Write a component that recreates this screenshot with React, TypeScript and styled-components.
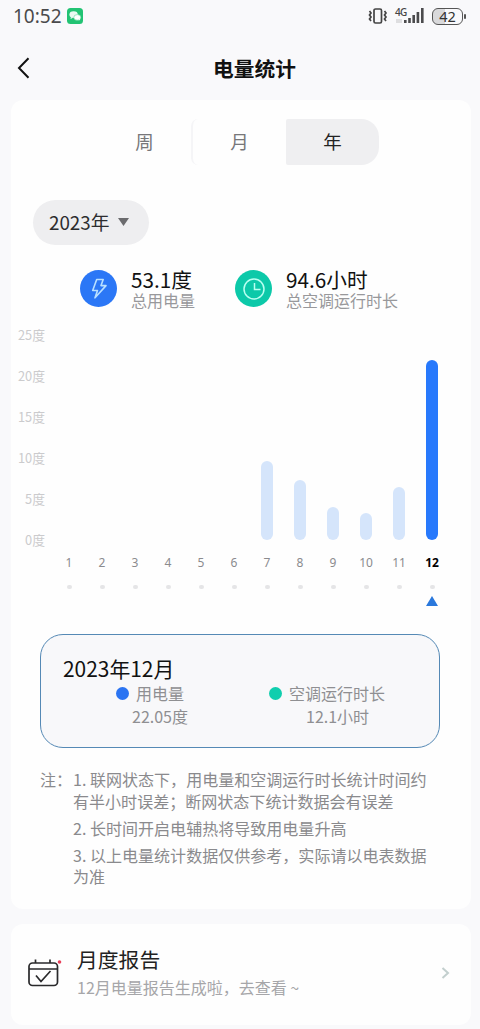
import React from 'react';
import styled, { createGlobalStyle } from 'styled-components';

const GlobalStyle = createGlobalStyle`
  *, *::before, *::after { box-sizing: border-box; }
  body {
    margin: 0;
    background: #f9f9fb;
    font-family: "Noto Sans CJK SC", sans-serif;
    color: #111;
  }
  svg { display: block; flex: none; }
`;

const Screen = styled.div`
  width: 480px;
  height: 1029px;
  overflow: hidden;
  display: flex;
  flex-direction: column;
`;

const StatusBar = styled.div`
  height: 34px;
  padding: 0 14px 2px 13px;
  display: flex;
  align-items: center;
`;

const Clock = styled.span`
  font: 400 19px/30px "Noto Sans", "Noto Sans CJK SC", sans-serif;
  color: #4a4a4c;
  width: 54px;
`;

const StatusIcons = styled.div`
  margin-left: auto;
  display: flex;
  align-items: center;
`;

const Signal = styled.div`
  position: relative;
  margin: 0 7px 0 7px;
`;

const NetworkType = styled.span`
  position: absolute;
  left: 0;
  top: -1px;
  font: 500 10px/12px "Noto Sans", sans-serif;
  letter-spacing: -0.6px;
  color: #444;
`;

const Battery = styled.div`
  width: 31px;
  height: 17px;
  border: 1.5px solid #555;
  border-radius: 6px;
  background: linear-gradient(90deg, #d9d9db 42%, #f9f9fb 42%);
  font: 400 14.5px/15px "Noto Sans", sans-serif;
  color: #333;
  text-align: center;
`;

const BatteryTip = styled.i`
  width: 2px;
  height: 5px;
  margin-left: 1px;
  background: #555;
  border-radius: 1px;
`;

const NavBar = styled.header`
  height: 66px;
  display: grid;
  grid-template-columns: 60px 1fr 31px;
  align-items: center;
  padding: 2px 0 0;
`;

const BackButton = styled.button`
  border: 0;
  background: none;
  padding: 0 0 0 17px;
`;

const NavTitle = styled.h1`
  margin: 0;
  padding-bottom: 1px;
  font-size: 20.7px;
  line-height: 30px;
  font-weight: 700;
  text-align: center;
`;

const Card = styled.section`
  width: 460px;
  margin-left: 11px;
  flex: none;
  background: #fefefe;
  border-radius: 12px;
`;

const UsageCard = styled(Card)`
  height: 809px;
  padding-top: 19px;
`;

const Tabs = styled.div`
  display: flex;
  height: 46px;
  width: 281px;
  margin-left: 87px;
`;

const Tab = styled.button<{ $active?: boolean; $divided?: boolean }>`
  flex: 1;
  border: 0;
  padding: 0 0 3px;
  font: 400 18.5px/28px "Noto Sans CJK SC", sans-serif;
  color: ${(p) => (p.$active ? '#222' : '#77777a')};
  background: ${(p) => (p.$active ? '#efeff1' : 'transparent')};
  border-radius: ${(p) => (p.$active ? '2px 18px 18px 2px' : '7px 0 0 7px')};
  border-left: ${(p) => (p.$divided ? '2px solid #f5f5f7' : '0')};
`;

const YearPicker = styled.button`
  margin: 35px 0 0 22px;
  width: 116px;
  height: 45px;
  border: 0;
  border-radius: 23px;
  background: #eeeef0;
  padding: 0 0 2px 16px;
  display: flex;
  align-items: center;
  gap: 9px;
  font: 400 18.8px/28px "Noto Sans CJK SC", sans-serif;
  color: #2c2c2e;
`;

const Stats = styled.div`
  display: flex;
  margin: 18.5px 0 0 69px;
  height: 50px;
`;

const Stat = styled.div<{ $width: number }>`
  width: ${(p) => p.$width}px;
  display: flex;
  align-items: center;
  gap: 14px;
`;

const StatValue = styled.div`
  font-size: 20.7px;
  line-height: 24px;
  color: #111;
`;

const StatLabel = styled.div`
  font-size: 16px;
  line-height: 19px;
  color: #98989b;
  white-space: nowrap;
`;

const Chart = styled.div`
  display: flex;
  margin-top: 11.5px;
  height: 288px;
`;

const YAxis = styled.div`
  width: 34px;
  display: flex;
  flex-direction: column;
  text-align: right;
  font-size: 12.8px;
  line-height: 20px;
  gap: 21px;
  color: #cbcbcd;
`;

const Months = styled.div`
  display: flex;
  margin-left: 7.5px;
`;

const Month = styled.div`
  width: 33px;
  display: flex;
  flex-direction: column;
  align-items: center;
`;

const BarTrack = styled.div`
  height: 215px;
  display: flex;
  align-items: flex-end;
`;

const Bar = styled.div<{ $active: boolean }>`
  width: 12.5px;
  border-radius: 7px;
  background: ${(p) => (p.$active ? '#2779fc' : '#d5e5fb')};
`;

const MonthLabel = styled.span<{ $active: boolean }>`
  margin-top: 12.5px;
  font: ${(p) => (p.$active ? 700 : 400)} 12px/20px "Noto Sans", sans-serif;
  color: ${(p) => (p.$active ? '#000' : '#8b8b8e')};
`;

const MonthDot = styled.i`
  width: 5px;
  height: 4px;
  margin: 12.5px 0 7px;
  border-radius: 2px;
  background: #e5e5e7;
`;

const Detail = styled.div`
  margin: 21px 0 0 29px;
  width: 400px;
  height: 114px;
  border: 1.5px solid #5589b5;
  border-radius: 23px;
  background: #f8f8fa;
  padding: 19px 0 0 22px;
`;

const DetailTitle = styled.h2`
  margin: 0;
  font-size: 20.9px;
  line-height: 28px;
  font-weight: 400;
`;

const DetailColumns = styled.div`
  display: flex;
  padding-left: 53px;
`;

const DetailItem = styled.div<{ $width: number }>`
  width: ${(p) => p.$width}px;
  font-size: 16px;
  line-height: 24px;
  color: #8f8f92;
`;

const Legend = styled.div`
  display: flex;
  align-items: center;
  gap: 7px;
  height: 22px;
  white-space: nowrap;
`;

const LegendDot = styled.i<{ $color: string }>`
  width: 13px;
  height: 13px;
  border-radius: 50%;
  background: ${(p) => p.$color};
`;

const DetailValue = styled.div<{ $indent: number }>`
  padding-left: ${(p) => p.$indent}px;
`;

const Notes = styled.div`
  display: flex;
  margin: 21px 0 0 29px;
  font-size: 16.05px;
  line-height: 21.5px;
  color: #8a8a8d;
`;

const NotesLabel = styled.div`
  width: 33px;
  white-space: nowrap;
`;

const NoteList = styled.div`
  width: 358px;
  display: flex;
  flex-direction: column;
  gap: 5.5px;
`;

const Note = styled.p`
  margin: 0;
`;

const ReportCard = styled(Card)`
  margin-top: 15px;
  height: 101px;
  padding: 0 21px 4px 16px;
  display: flex;
  align-items: center;
`;

const ReportText = styled.div`
  flex: 1;
  margin-left: 14px;
  padding-bottom: 1px;
`;

const ReportTitle = styled.div`
  font-size: 20.8px;
  line-height: 30px;
  color: #222;
`;

const ReportHint = styled.div`
  font-size: 16px;
  line-height: 26px;
  color: #a6a6a9;
`;

const months = [0, 0, 0, 0, 0, 0, 79, 60, 33.5, 27, 53, 180.5];

export default function App() {
  return (
    <>
      <GlobalStyle />
      <Screen>
        <StatusBar>
          <Clock>10:52</Clock>
          <svg width="16" height="16" viewBox="0 0 16 16">
            <rect width="16" height="16" rx="3.5" fill="#22c373" />
            <ellipse cx="6.6" cy="6.6" rx="4.2" ry="3.4" fill="#fff" opacity=".9" />
            <ellipse cx="10.3" cy="9.4" rx="3.5" ry="2.8" fill="#fff" stroke="#5fd69a" strokeWidth=".6" />
            <path d="M4 9l-.5 2 2-1M11.5 11.5l1.5 1-.3-1.8" fill="#fff" />
          </svg>
          <StatusIcons>
            <svg width="20" height="18" viewBox="0 0 20 18" fill="none" stroke="#444">
              <rect x="6" y="2" width="7.5" height="14" rx="1.5" strokeWidth="1.7" />
              <path
                d="M1.5 4l1.5 2-1.5 2 1.5 2-1.5 2 1.5 2M16.5 4l1.5 2-1.5 2 1.5 2-1.5 2 1.5 2"
                strokeWidth="1.7"
              />
            </svg>
            <Signal>
              <svg width="30" height="18" viewBox="0 0 30 18" fill="#4b4b4d">
                <rect x="1" y="12" width="6" height="4" fill="#dedee0" />
                <rect x="9" y="13" width="2.6" height="3" />
                <rect x="13.2" y="11" width="2.6" height="5" />
                <rect x="17.4" y="8" width="2.6" height="8" />
                <rect x="21.6" y="5" width="2.6" height="11" />
                <rect x="26" y="1" width="2.6" height="15" />
              </svg>
              <NetworkType>4G</NetworkType>
            </Signal>
            <Battery>42</Battery>
            <BatteryTip />
          </StatusIcons>
        </StatusBar>

        <NavBar>
          <BackButton aria-label="返回">
            <svg width="13" height="22" viewBox="0 0 13 22" fill="none" stroke="#111" strokeWidth="2">
              <path d="M11.5 1.2L2 11l9.5 9.8" />
            </svg>
          </BackButton>
          <NavTitle>电量统计</NavTitle>
        </NavBar>

        <UsageCard>
          <Tabs>
            <Tab>周</Tab>
            <Tab $divided>月</Tab>
            <Tab $active>年</Tab>
          </Tabs>

          <YearPicker>
            2023年
            <svg width="11" height="8" viewBox="0 0 11 8">
              <path d="M0 0h11L5.5 8z" fill="#6b6b6e" />
            </svg>
          </YearPicker>

          <Stats>
            <Stat $width={155}>
              <svg width="37" height="37" viewBox="0 0 37 37">
                <circle cx="18.5" cy="18.5" r="18.5" fill="#2b77f6" />
                <path
                  d="M16.7 9.5H23.2L21 15.6H26L15 27.8L17.5 20.5H12.7z"
                  fill="none"
                  stroke="#b9e0ff"
                  strokeWidth="1.6"
                  strokeLinejoin="round"
                />
              </svg>
              <div>
                <StatValue>53.1度</StatValue>
                <StatLabel>总用电量</StatLabel>
              </div>
            </Stat>
            <Stat $width={200}>
              <svg width="37" height="37" viewBox="0 0 37 37">
                <circle cx="18.5" cy="18.5" r="18.5" fill="#0cc9a9" />
                <circle cx="19" cy="19" r="10" fill="none" stroke="#b8fff1" strokeWidth="1.5" />
                <path d="M19.5 13V19.5h6" fill="none" stroke="#b8fff1" strokeWidth="1.5" />
              </svg>
              <div>
                <StatValue>94.6小时</StatValue>
                <StatLabel>总空调运行时长</StatLabel>
              </div>
            </Stat>
          </Stats>

          <Chart>
            <YAxis>
              {[25, 20, 15, 10, 5, 0].map((v) => (
                <span key={v}>{v}度</span>
              ))}
            </YAxis>
            <Months>
              {months.map((height, i) => (
                <Month key={i}>
                  <BarTrack>
                    <Bar $active={i === 11} style={{ height }} />
                  </BarTrack>
                  <MonthLabel $active={i === 11}>{i + 1}</MonthLabel>
                  <MonthDot />
                  {i === 11 && (
                    <svg width="12" height="10" viewBox="0 0 12 10">
                      <path d="M6 0l6 10H0z" fill="#2a78dc" />
                    </svg>
                  )}
                </Month>
              ))}
            </Months>
          </Chart>

          <Detail>
            <DetailTitle>2023年12月</DetailTitle>
            <DetailColumns>
              <DetailItem $width={153}>
                <Legend>
                  <LegendDot $color="#2b74f2" />
                  用电量
                </Legend>
                <DetailValue $indent={16}>22.05度</DetailValue>
              </DetailItem>
              <DetailItem $width={120}>
                <Legend>
                  <LegendDot $color="#10ceae" />
                  空调运行时长
                </Legend>
                <DetailValue $indent={37}>12.1小时</DetailValue>
              </DetailItem>
            </DetailColumns>
          </Detail>

          <Notes>
            <NotesLabel>注：</NotesLabel>
            <NoteList>
              <Note>1. 联网状态下，用电量和空调运行时长统计时间约有半小时误差；断网状态下统计数据会有误差</Note>
              <Note>2. 长时间开启电辅热将导致用电量升高</Note>
              <Note>3. 以上电量统计数据仅供参考，实际请以电表数据为准</Note>
            </NoteList>
          </Notes>
        </UsageCard>

        <ReportCard>
          <svg width="36" height="30" viewBox="0 0 36 30" fill="none" stroke="#29292b" strokeWidth="1.7">
            <rect x="2" y="5" width="28.5" height="22.5" rx="3.5" />
            <path d="M2 11h28.5M8.5 1.5V5M23 1.5V5" />
            <path d="M9 17.5l5 6L23.5 13" />
            <circle cx="32.5" cy="4" r="1.8" fill="#e8405a" stroke="none" />
          </svg>
          <ReportText>
            <ReportTitle>月度报告</ReportTitle>
            <ReportHint>12月电量报告生成啦，去查看 ~</ReportHint>
          </ReportText>
          <svg width="9" height="12" viewBox="0 0 9 12" fill="none" stroke="#c3cfce" strokeWidth="2">
            <path d="M1.5 1L7 6l-5.5 5" />
          </svg>
        </ReportCard>
      </Screen>
    </>
  );
}
